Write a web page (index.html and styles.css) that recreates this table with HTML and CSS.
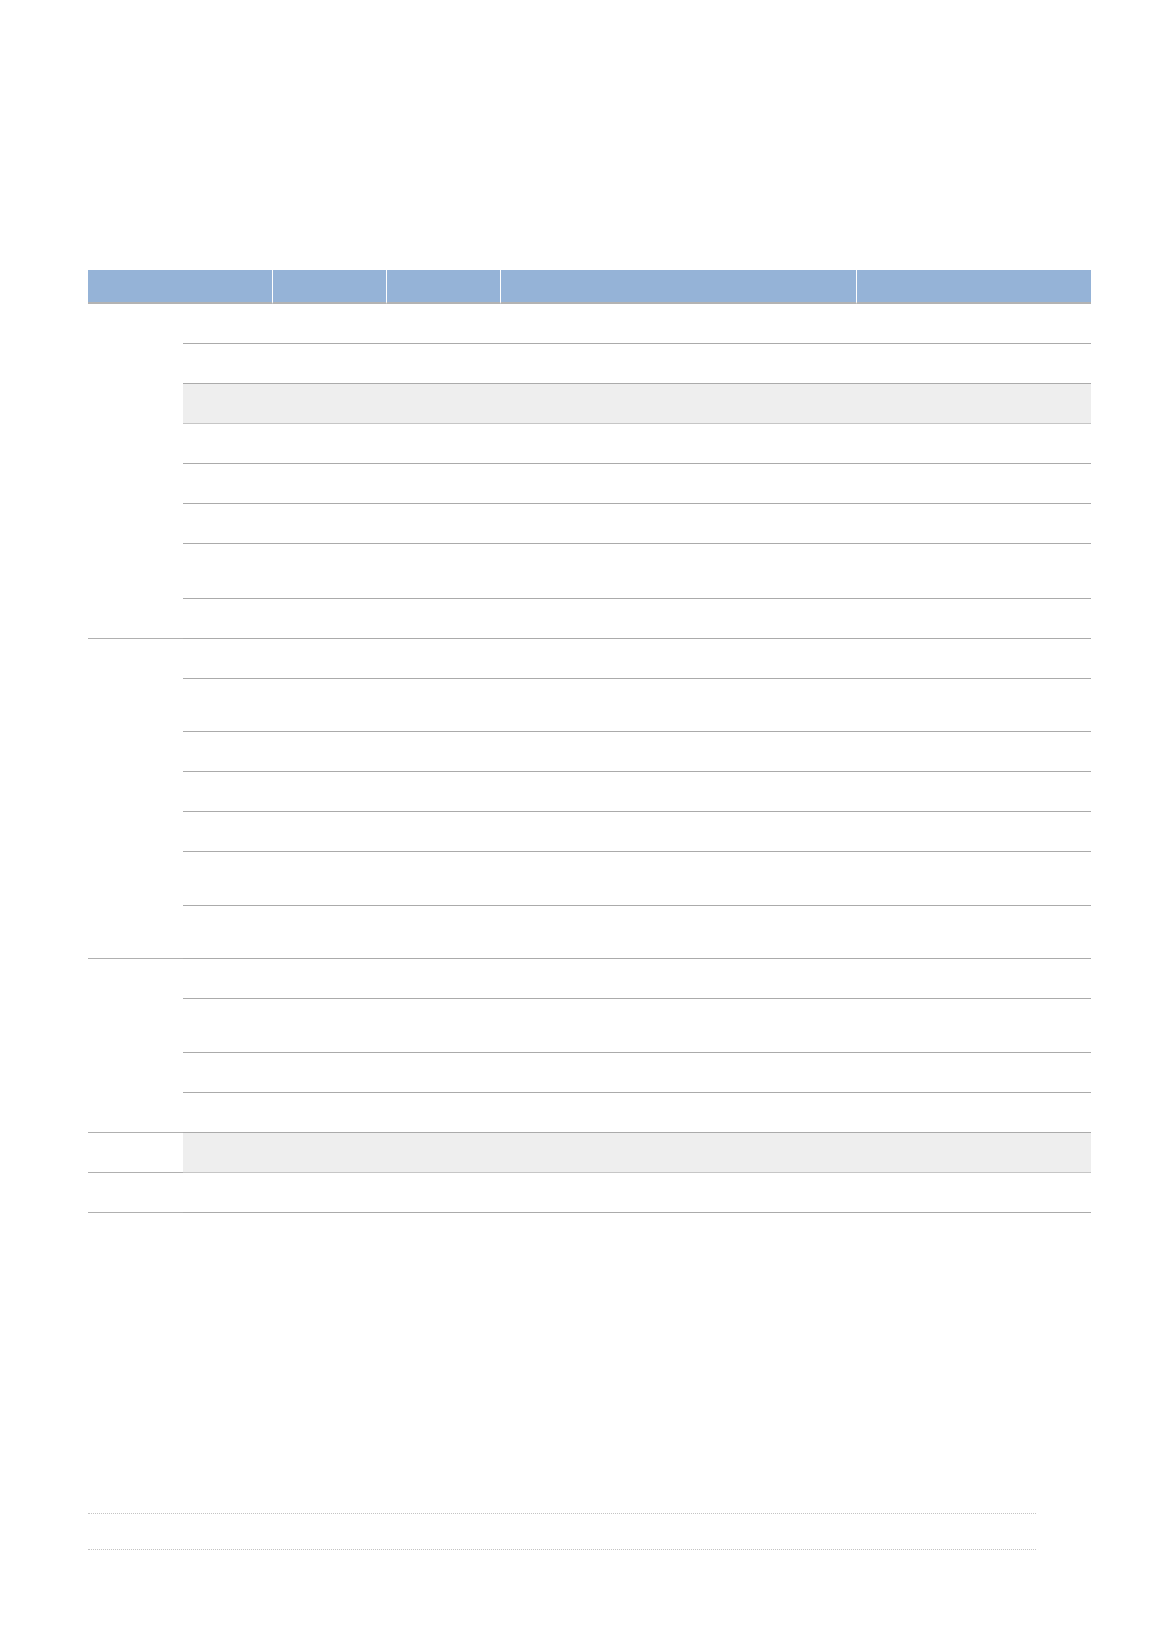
FILE: index.html
```html
<!DOCTYPE html>
<html lang="en">
<head>
<meta charset="utf-8">
<title>Table</title>
<link rel="stylesheet" href="styles.css">
</head>
<body>
<main class="page">
  <table class="grid">
    <colgroup>
      <col class="c1"><col class="c2"><col class="c3"><col class="c4"><col class="c5"><col class="c6">
    </colgroup>
    <thead>
      <tr class="head">
        <th colspan="2"></th><th class="sep"></th><th class="sep"></th><th class="sep"></th><th class="sep"></th>
      </tr>
    </thead>
    <tbody>
      <tr class="h40"><td rowspan="8" class="grp"></td><td></td><td></td><td></td><td></td><td></td></tr>
      <tr class="h40"><td></td><td></td><td></td><td></td><td></td></tr>
      <tr class="h40 shade"><td></td><td></td><td></td><td></td><td></td></tr>
      <tr class="h40"><td></td><td></td><td></td><td></td><td></td></tr>
      <tr class="h40"><td></td><td></td><td></td><td></td><td></td></tr>
      <tr class="h40"><td></td><td></td><td></td><td></td><td></td></tr>
      <tr class="h55"><td></td><td></td><td></td><td></td><td></td></tr>
      <tr class="h40"><td></td><td></td><td></td><td></td><td></td></tr>

      <tr class="h40"><td rowspan="7" class="grp"></td><td></td><td></td><td></td><td></td><td></td></tr>
      <tr class="h53"><td></td><td></td><td></td><td></td><td></td></tr>
      <tr class="h40"><td></td><td></td><td></td><td></td><td></td></tr>
      <tr class="h40"><td></td><td></td><td></td><td></td><td></td></tr>
      <tr class="h40"><td></td><td></td><td></td><td></td><td></td></tr>
      <tr class="h54"><td></td><td></td><td></td><td></td><td></td></tr>
      <tr class="h53"><td></td><td></td><td></td><td></td><td></td></tr>

      <tr class="h40"><td rowspan="4" class="grp"></td><td></td><td></td><td></td><td></td><td></td></tr>
      <tr class="h54"><td></td><td></td><td></td><td></td><td></td></tr>
      <tr class="h40"><td></td><td></td><td></td><td></td><td></td></tr>
      <tr class="h40"><td></td><td></td><td></td><td></td><td></td></tr>

      <tr class="h40 shade"><td class="grp plain"></td><td></td><td></td><td></td><td></td><td></td></tr>
      <tr class="h40"><td class="grp"></td><td></td><td></td><td></td><td></td><td></td></tr>
    </tbody>
  </table>

  <div class="notes">
    <div class="note-line"></div>
    <div class="note-line"></div>
  </div>
</main>
</body>
</html>
```

FILE: styles.css
```css
html, body {
  margin: 0;
  padding: 0;
  background: #ffffff;
  font-family: "Liberation Sans", Arial, sans-serif;
  font-size: 13px;
  color: #333;
}

.page {
  padding: 270px 0 40px 88px;
  width: 1003px;
}

.grid {
  width: 1003px;
  table-layout: fixed;
  border-collapse: separate;
  border-spacing: 0;
}

.c1 { width: 95px; }
.c2 { width: 89px; }
.c3 { width: 114px; }
.c4 { width: 114px; }
.c5 { width: 356px; }
.c6 { width: 235px; }

.grid th,
.grid td {
  padding: 0;
  margin: 0;
}

.head {
  height: 34px;
}

.head th {
  background: #95b3d7;
  border-bottom: 2px solid #b3b3b3;
}

.head th.sep {
  border-left: 1px solid #ffffff;
}

.grid td {
  border-bottom: 1px solid #ababab;
  background: #ffffff;
}

.grid td.grp {
  border-bottom: 1px solid #b0b0b0;
  background: #ffffff;
}

.shade td {
  background: #eeeeee;
  border-bottom-color: #c6c6c6;
}

.shade td.plain {
  background: #ffffff;
  border-bottom-color: #b0b0b0;
}

.h40 { height: 40px; }
.h53 { height: 53px; }
.h54 { height: 54px; }
.h55 { height: 55px; }

.notes {
  margin-top: 300px;
  width: 948px;
  display: flex;
  flex-direction: column;
  gap: 35px;
}

.note-line {
  border-top: 1px dotted #c4c4c4;
  height: 0;
}
```
